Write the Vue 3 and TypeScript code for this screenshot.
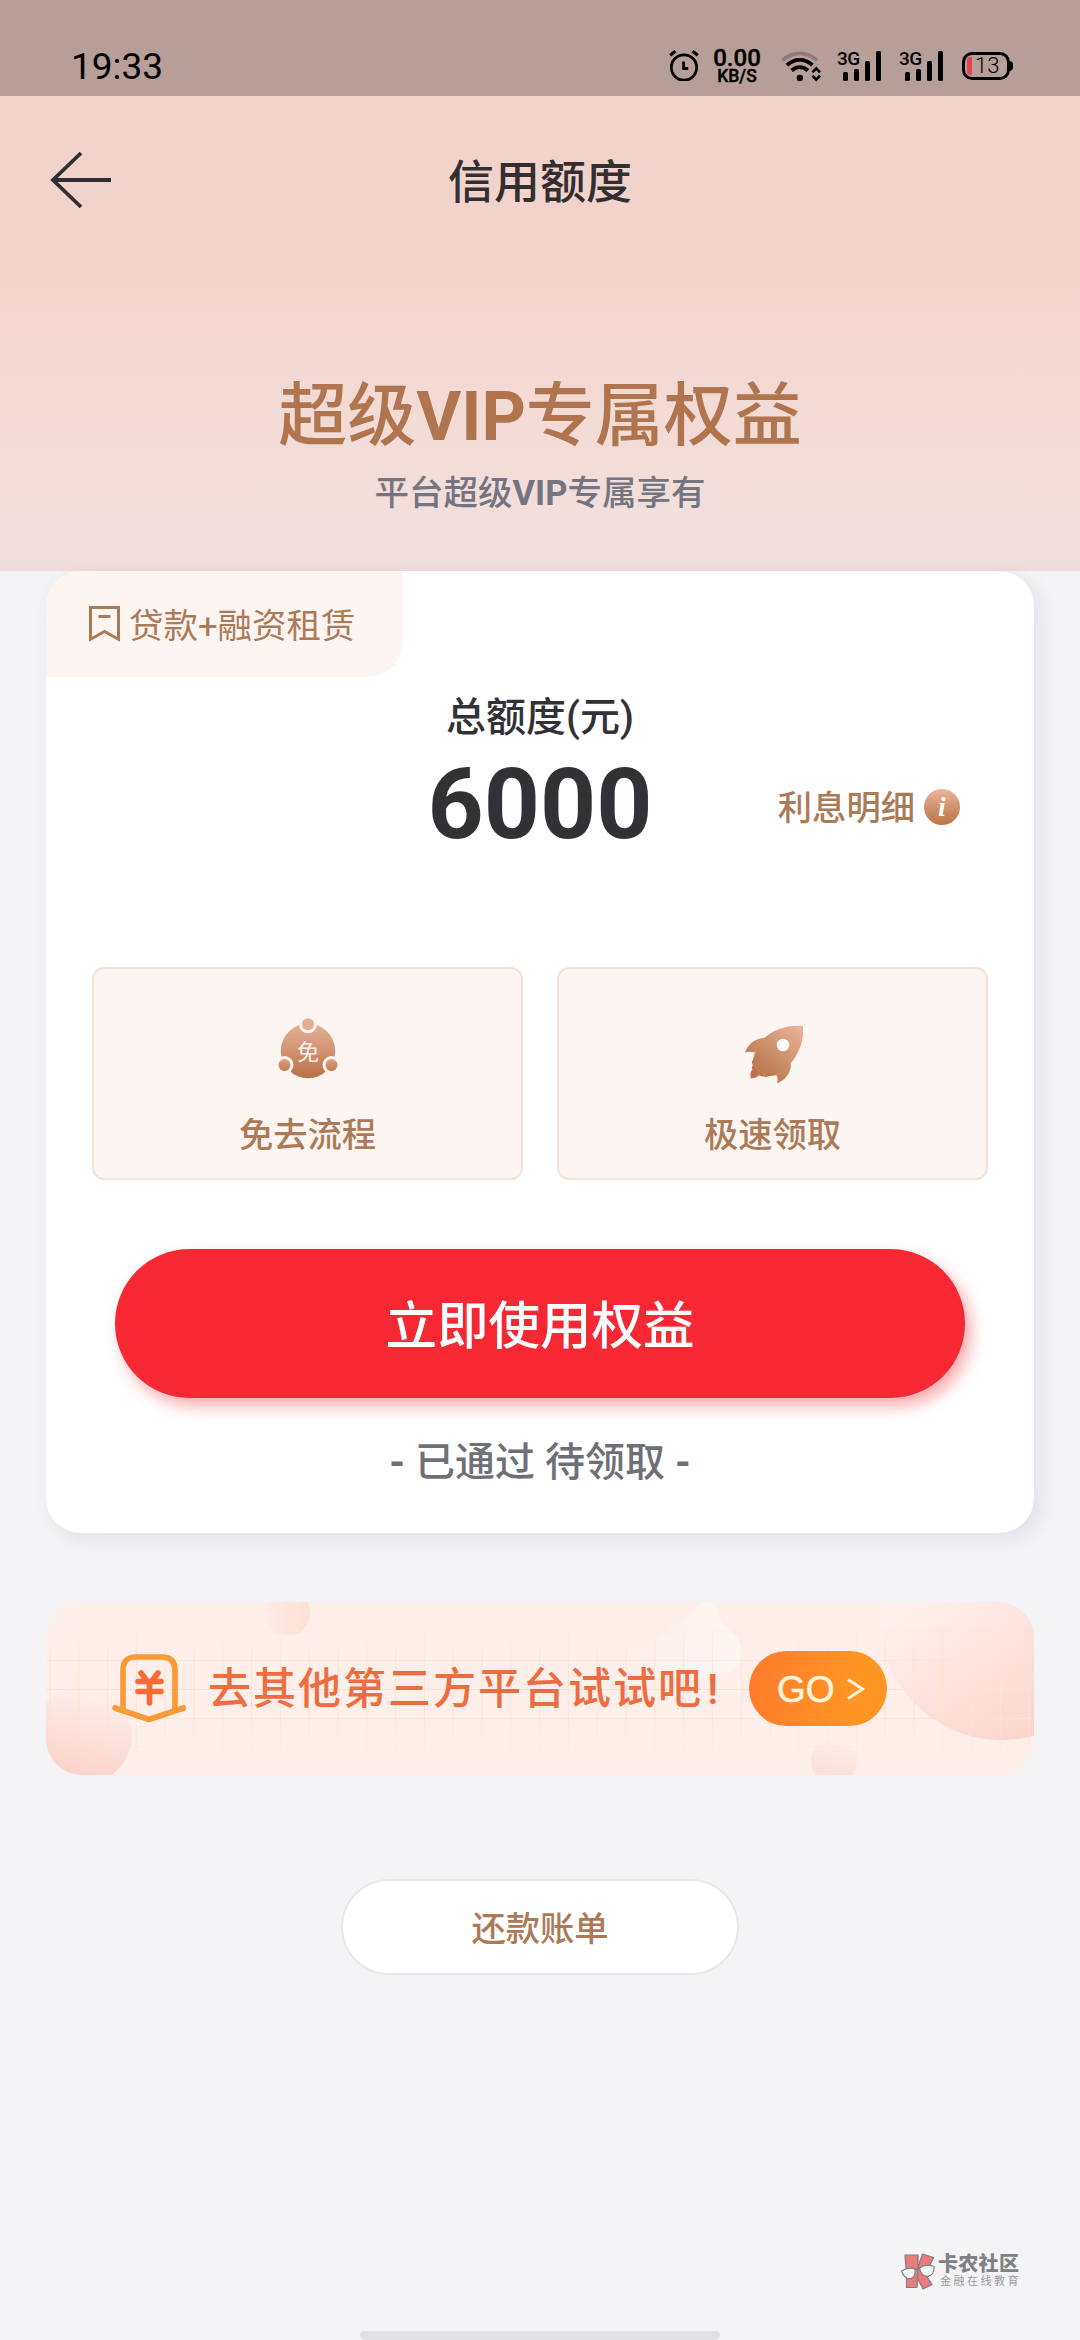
<script setup lang="ts">
interface Perk {
  id: string
  label: string
}

const perks: Perk[] = [
  { id: 'waive', label: '免去流程' },
  { id: 'rocket', label: '极速领取' },
]

const signals: number[] = [0, 1]

const gridColumns: number[] = Array.from({ length: 35 }, (_, i) => 4 + i * 28.8)
const gridRows: number[] = [30, 58.5, 87.5, 116.5, 145]
</script>

<template>
  <div class="page">
    <header class="hero">
      <div class="status">
        <span class="clock">19:33</span>
        <div class="indicators">
          <svg class="alarm" width="30" height="32" viewBox="0 0 30 32" fill="none" stroke="#000">
            <circle cx="15" cy="18.5" r="12.7" stroke-width="2.8" />
            <path d="M14.6 12.5v7h4.6" stroke-width="2.8" />
            <path d="M1.2 6.2 6.4 2.2M28.8 6.2 23.6 2.2" stroke-width="3.2" />
          </svg>
          <div class="speed">
            <span class="speed-value">0.00</span>
            <span class="speed-unit">KB/S</span>
          </div>
          <svg class="wifi" width="40" height="32" viewBox="0 0 40 32" fill="none">
            <path d="M1.5 10.5C11.5 1 26 1 36 10.5" stroke="#8f7c77" stroke-width="3.6" />
            <path d="M6 15.2C13.5 8.2 24 8.2 31.5 15.2" stroke="#000" stroke-width="3.8" />
            <path d="M10.5 20.5C15.5 16 22 16 27 20.5" stroke="#000" stroke-width="3.8" />
            <circle cx="18.8" cy="28" r="3.2" fill="#000" />
            <path d="m31.4 22.4 3.8-4 3.8 4M31.4 25.6l3.8 4 3.8-4" stroke="#000" stroke-width="2.6" />
          </svg>
          <div v-for="s in signals" :key="s" class="signal">
            <span class="net">3G</span>
            <svg width="44" height="32" viewBox="0 0 44 32">
              <rect x="6" y="22" width="5" height="9" rx="1.5" />
              <rect x="17" y="19" width="5" height="12" rx="1.5" />
              <rect x="28" y="11" width="5" height="20" rx="1.5" />
              <rect x="39" y="1" width="5" height="30" rx="1.5" />
            </svg>
          </div>
          <div class="battery"><i class="level"></i><span>13</span></div>
        </div>
      </div>

      <nav class="nav">
        <svg class="back" width="64" height="60" viewBox="0 0 64 60" fill="none" stroke="#332e31" stroke-width="3.8">
          <path d="M63 30H5M33 3 5 30l28 27" />
        </svg>
        <h1>信用额度</h1>
      </nav>

      <h2 class="headline">超级<b>VIP</b>专属权益</h2>
      <p class="subline">平台超级<b>VIP</b>专属享有</p>
    </header>

    <main>
      <section class="card">
        <div class="tag">
          <svg width="31" height="36" viewBox="0 0 31 36" fill="none" stroke="#ad7a58" stroke-width="3">
            <path d="M1.5 1.5h28v31.8l-14-7.8-14 7.8zM9.5 10.5h12" />
          </svg>
          <span>贷款+融资租赁</span>
        </div>

        <p class="total-label">总额度(元)</p>
        <div class="total">
          <strong>6000</strong>
          <a class="interest">
            <span>利息明细</span>
            <i class="info">i</i>
          </a>
        </div>

        <div class="perks">
          <div v-for="p in perks" :key="p.id" class="perk">
            <svg v-if="p.id === 'waive'" width="60" height="66" viewBox="0 0 60 66">
              <defs>
                <linearGradient id="copper" x1="0" y1="0" x2="0" y2="60" gradientUnits="userSpaceOnUse">
                  <stop offset="0" stop-color="#ecb197" />
                  <stop offset="0.35" stop-color="#daa083" />
                  <stop offset="1" stop-color="#b97146" />
                </linearGradient>
                <linearGradient id="copperDot" x1="0" y1="0" x2="0" y2="1">
                  <stop offset="0" stop-color="#dfa388" />
                  <stop offset="1" stop-color="#c07a51" />
                </linearGradient>
              </defs>
              <circle cx="30" cy="33" r="27.2" fill="url(#copper)" />
              <g fill="#fdf5f2">
                <circle cx="30" cy="6.3" r="9" />
                <circle cx="6.5" cy="47" r="9" />
                <circle cx="53.5" cy="47" r="9" />
              </g>
              <circle cx="30" cy="6.3" r="6" fill="#e6ac92" />
              <circle cx="6.5" cy="47" r="6" fill="url(#copperDot)" />
              <circle cx="53.5" cy="47" r="6" fill="url(#copperDot)" />
              <text x="30" y="42" class="waive-mark">免</text>
            </svg>
            <svg v-else width="60" height="66" viewBox="0 0 60 66">
              <defs>
                <linearGradient id="rocketBody" x1="56" y1="10" x2="14" y2="58" gradientUnits="userSpaceOnUse">
                  <stop offset="0" stop-color="#eab296" />
                  <stop offset="0.5" stop-color="#cc9370" />
                  <stop offset="1" stop-color="#b97148" />
                </linearGradient>
              </defs>
              <g fill="url(#rocketBody)">
                <path d="M2 34.5C5 26 12 20 23 19.5L12 34.5C8 33.5 5 33.5 2 34.5z" />
                <path d="M34 65.5C42 62 48 56 48 45L33 56.5C35 59 35 62 34 65.5z" />
                <path d="M60 8C44 6 27 13 19.5 22C14 29 11 37 10 42C8 43 9 46 10 47C8.5 49 8.5 50 9.5 51.5C7 54 7 57 8 60.5C12 60 14 59 16 57.5C18 57.5 19 59 21 58.5C23 59.5 24 59 25.5 58C30 58.5 35 57 39 54C51 45 62 27 60 8z" />
              </g>
              <path d="M23 19.5C16 25 12 31 11 38M33 57C39 55 44 51 48 45M11.5 47C15 52 19 56 24.5 58" fill="none" stroke="#d39c7b" stroke-width="0.8" opacity="0.7" />
              <circle cx="40" cy="27" r="6.3" fill="#fffaf8" />
            </svg>
            <span>{{ p.label }}</span>
          </div>
        </div>

        <button class="use">立即使用权益</button>
        <p class="state"><b>-</b> 已通过 待领取 <b>-</b></p>
      </section>

      <section class="banner">
        <svg class="decor" width="988" height="173" viewBox="0 0 988 173">
          <defs>
            <linearGradient id="fadeY" x1="0" y1="0" x2="0" y2="1">
              <stop offset="0.12" stop-color="#fff" stop-opacity="0" />
              <stop offset="0.4" stop-color="#fff" />
              <stop offset="0.62" stop-color="#fff" />
              <stop offset="0.92" stop-color="#fff" stop-opacity="0" />
            </linearGradient>
            <mask id="gridMask"><rect width="988" height="173" fill="url(#fadeY)" /></mask>
            <linearGradient id="bubbleTop" x1="0" y1="0" x2="1" y2="0">
              <stop offset="0" stop-color="#feece6" /><stop offset="1" stop-color="#fee1d5" />
            </linearGradient>
            <linearGradient id="bubbleLeft" x1="0.6" y1="0" x2="0.3" y2="1">
              <stop offset="0.1" stop-color="#fdeeea" /><stop offset="1" stop-color="#fbcdc5" />
            </linearGradient>
            <linearGradient id="bubbleRight" x1="0.3" y1="0.25" x2="0.8" y2="1">
              <stop offset="0.1" stop-color="#fef0ec" /><stop offset="1" stop-color="#fbd0c6" />
            </linearGradient>
            <linearGradient id="bubbleLow" x1="0.6" y1="0" x2="0.4" y2="1">
              <stop offset="0" stop-color="#feefeb" /><stop offset="0.9" stop-color="#fddfd9" />
            </linearGradient>
            <linearGradient id="ribbon" x1="0" y1="0" x2="1" y2="0">
              <stop offset="0" stop-color="#fff" stop-opacity="0" /><stop offset="1" stop-color="#fff" stop-opacity="0.45" />
            </linearGradient>
          </defs>
          <path d="M655 0H670C670 26 696 29 697 52C696 68 680 75 660 73C625 80 590 65 576 58C605 40 640 20 655 0z" fill="url(#ribbon)" />
          <circle cx="241.5" cy="11" r="22.5" fill="url(#bubbleTop)" />
          <circle cx="37" cy="133" r="49" fill="url(#bubbleLeft)" />
          <circle cx="956" cy="15" r="123" fill="url(#bubbleRight)" />
          <circle cx="788" cy="159" r="23" fill="url(#bubbleLow)" />
          <g mask="url(#gridMask)" stroke="#fde3cd" stroke-width="1">
            <line v-for="x in gridColumns" :key="'c' + x" :x1="x" :x2="x" y1="26" y2="158" />
            <line v-for="y in gridRows" :key="'r' + y" x1="0" x2="988" :y1="y" :y2="y" />
          </g>
        </svg>
        <svg class="coupon" width="76" height="72" viewBox="0 0 76 72" fill="none" stroke-linecap="round" stroke-linejoin="round">
          <path d="M11 56V17Q11 4 24 4H50Q63 4 63 17V56" stroke="#f89b36" stroke-width="5.6" />
          <path d="M3 55 37 66.5 71.5 55" stroke="#f89b36" stroke-width="5.6" />
          <path d="M29 20l8.5 11L46 20M26 28.5h23M26 38.5h23M37.5 30v20" stroke="#fb6a36" stroke-width="5.6" />
        </svg>
        <span class="banner-text">去其他第三方平台试试吧<em>!</em></span>
        <div class="go">
          <span>GO</span>
          <svg width="20" height="24" viewBox="0 0 20 24" fill="none" stroke="#fff3d8" stroke-width="3"><path d="M2 2.5 16.5 12 2 21.5" /></svg>
        </div>
      </section>

      <button class="bill">还款账单</button>
    </main>

    <footer>
      <div class="brand">
        <svg width="36" height="37" viewBox="0 0 36 37" stroke="#807d80" stroke-width="1.2">
          <path d="M22.5 1 33.5 4.5 28 16 24.5 20 32 31.5 23 36 17.5 25V15z" fill="#ea7b80" />
          <path d="M5 2H18V15L17.5 25 17 34.5H6.5V20z" fill="#ea7b80" />
          <path d="M1.5 18C6 15 11 14.5 15 16C16 22 13 26 9 25.8C5 25.5 3 22 1.5 18z" fill="#f4f6f5" />
          <path d="M19.5 15C23 12 29 11.5 34 13.5C34.5 19 32 22.8 28 23.3C23 23.5 20.5 20 19.5 15z" fill="#f4f6f5" />
          <path d="M15 16.5 19.5 15.5" fill="none" />
        </svg>
        <div class="brand-text"><b>卡农社区</b><small>金融在线教育</small></div>
      </div>
      <div class="handle"></div>
    </footer>
  </div>
</template>

<style>
body {
  margin: 0;
  background: #f4f4f7;
}
</style>

<style scoped>
.page {
  width: 1080px;
  height: 2340px;
  overflow: hidden;
  display: flex;
  flex-direction: column;
  background: #f4f4f7;
  font-family: Roboto, "Noto Sans CJK SC", sans-serif;
  color: #323136;
}
h1, h2, p { margin: 0; font-weight: 500; }
button { font-family: inherit; padding: 0; border: 0; }

.hero {
  height: 571px;
  flex: none;
  display: flex;
  flex-direction: column;
  background: linear-gradient(#f1d3cb 0, #f1d3cb 250px, #f4d7d1 330px, #f2ddd8 460px, #f2dedd 540px, #eedddb 571px);
}
.status {
  height: 96px;
  box-sizing: border-box;
  padding: 49px 70px 0 71px;
  display: flex;
  justify-content: space-between;
  background: #b59f98;
  color: #000;
}
.clock { font-size: 37px; line-height: 35px; }
.indicators { display: flex; }
.alarm { margin-right: 14px; }
.speed { width: 48px; display: flex; flex-direction: column; align-items: center; font-weight: 500; }
.speed-value { font-size: 24px; line-height: 18px; -webkit-text-stroke: 0.4px #000; }
.speed-unit { margin-top: 1px; font-size: 17.5px; line-height: 17px; -webkit-text-stroke: 0.4px #000; }
.wifi { margin: 1px 0 0 20px; }
.signal { position: relative; width: 44px; margin: 1px 0 0 16px; }
.signal + .signal { margin-left: 18px; }
.net { position: absolute; left: 0; top: 0; font-size: 19px; line-height: 18px; font-weight: 500; letter-spacing: -0.6px; }
.battery {
  position: relative;
  box-sizing: border-box;
  width: 48px;
  height: 28px;
  margin: 3px 0 0 19px;
  border: 3px solid #000;
  border-radius: 10px;
  display: flex;
  align-items: center;
  padding-left: 2px;
}
.battery::after {
  content: "";
  position: absolute;
  right: -6px;
  top: 6px;
  width: 4px;
  height: 10px;
  border-radius: 0 4px 4px 0;
  background: #000;
}
.level { width: 5px; height: 18px; border-radius: 3px 1px 1px 3px; background: #e3444f; }
.battery span { margin-left: 3px; font-size: 22px; line-height: 22px; font-weight: 300; }

.nav { position: relative; height: 168px; display: flex; align-items: center; justify-content: center; }
.back { position: absolute; left: 48px; top: 54px; }
h1 { font-size: 46px; line-height: 60px; color: #332e31; padding-top: 4px; }
.headline { margin-top: 108px; font-size: 69px; line-height: 90px; text-align: center; color: #b0754f; }
.subline { margin-top: 8px; font-size: 34.5px; line-height: 46px; text-align: center; color: #747580; }

main { display: flex; flex-direction: column; align-items: center; }
.card {
  width: 988px;
  height: 962px;
  border-radius: 35px;
  background: #fff;
  box-shadow: 6px 6px 18px rgba(60, 60, 100, 0.1);
  display: flex;
  flex-direction: column;
  align-items: center;
}
.tag {
  align-self: flex-start;
  box-sizing: border-box;
  width: 357px;
  height: 106px;
  padding: 0 0 2px 43px;
  display: flex;
  align-items: center;
  gap: 9px;
  border-radius: 35px 0 35px 0;
  background: #fdf5f2;
  color: #ad7a58;
  font-size: 34.5px;
}
.tag svg { margin-top: 1px; }
.total-label { margin-top: 15px; font-size: 40px; line-height: 52px; }
.total { position: relative; width: 100%; height: 119px; text-align: center; }
.total strong { position: relative; top: 1px; font-size: 98px; line-height: 120px; }
.interest {
  position: absolute;
  right: 74px;
  top: 40px;
  height: 46px;
  display: flex;
  align-items: center;
  gap: 9px;
  font-size: 34.3px;
  line-height: 44px;
  font-weight: 500;
  color: #ad7a58;
}
.interest span { padding-top: 2px; }
.info {
  width: 36px;
  height: 36px;
  border-radius: 50%;
  background: linear-gradient(#ecb59e, #d09370 50%, #bd7446);
  color: #fff;
  font: italic bold 28px/35px "Liberation Serif", serif;
  text-align: center;
}
.perks { margin-top: 104px; width: 896px; display: flex; justify-content: space-between; }
.perk {
  box-sizing: border-box;
  width: 431px;
  height: 213px;
  border: 2px solid #f4e2d8;
  border-radius: 12px;
  background: #fdf5f2;
  display: flex;
  flex-direction: column;
  align-items: center;
  padding-top: 49px;
  font-size: 34.3px;
  line-height: 44px;
  font-weight: 500;
  color: #ad7a58;
}
.perk span { margin-top: 29px; }
.waive-mark { font-size: 22px; font-weight: 400; fill: #fff1ea; text-anchor: middle; }
.use {
  margin-top: 69px;
  width: 850px;
  height: 149px;
  padding-bottom: 4px;
  border-radius: 75px;
  background: #f62833;
  box-shadow: 6px 8px 16px rgba(246, 40, 51, 0.4);
  color: #fff;
  font-size: 51.5px;
  font-weight: 500;
}
.state { margin-top: 39px; font-size: 40px; line-height: 52px; color: #6f7077; }

.banner {
  position: relative;
  margin-top: 69px;
  width: 988px;
  height: 173px;
  border-radius: 36px;
  overflow: hidden;
  background: #feefeb;
  display: flex;
  align-items: center;
}
.decor { position: absolute; left: 0; top: 0; }
.coupon { position: relative; margin: 0 0 0 66px; }
.banner-text {
  position: relative;
  margin-left: 20px;
  padding-bottom: 7px;
  width: 541px;
  font-size: 43px;
  letter-spacing: 2px;
  font-weight: 500;
  color: #ee6d40;
  white-space: nowrap;
}
.banner-text em { font-style: normal; margin-left: 4px; }
.go {
  position: relative;
  box-sizing: border-box;
  width: 138px;
  height: 75px;
  border-radius: 38px;
  background: linear-gradient(100deg, #ff7a2d, #ff9523 75%);
  padding-left: 28px;
  display: flex;
  align-items: center;
  gap: 11px;
  color: #fff3d8;
  font: 37px/75px "Liberation Sans", sans-serif;
  -webkit-text-stroke: 0.6px #fff3d8;
}
.go span { padding-top: 2px; }

.bill {
  margin-top: 104px;
  box-sizing: border-box;
  width: 398px;
  height: 96px;
  padding-bottom: 3px;
  border: 2px solid #e7e7eb;
  border-radius: 48px;
  background: #fff;
  color: #ad7a58;
  font-size: 34.3px;
  font-weight: 500;
}

footer { margin-top: auto; display: flex; flex-direction: column; }
.brand { align-self: flex-end; margin-right: 60px; display: flex; gap: 2px; }
.brand-text { width: 82px; display: flex; flex-direction: column; white-space: nowrap; padding-top: 1px; }
.brand-text b { font-size: 20px; line-height: 20px; font-weight: 900; color: #818184; letter-spacing: 0.3px; }
.brand-text small { font-size: 11px; line-height: 13px; margin: 1px 0 0 2px; letter-spacing: 2.5px; color: #98989b; }
.handle { align-self: center; margin-top: 41px; width: 360px; height: 9px; border-radius: 5px; background: #e1e1e3; }
</style>
